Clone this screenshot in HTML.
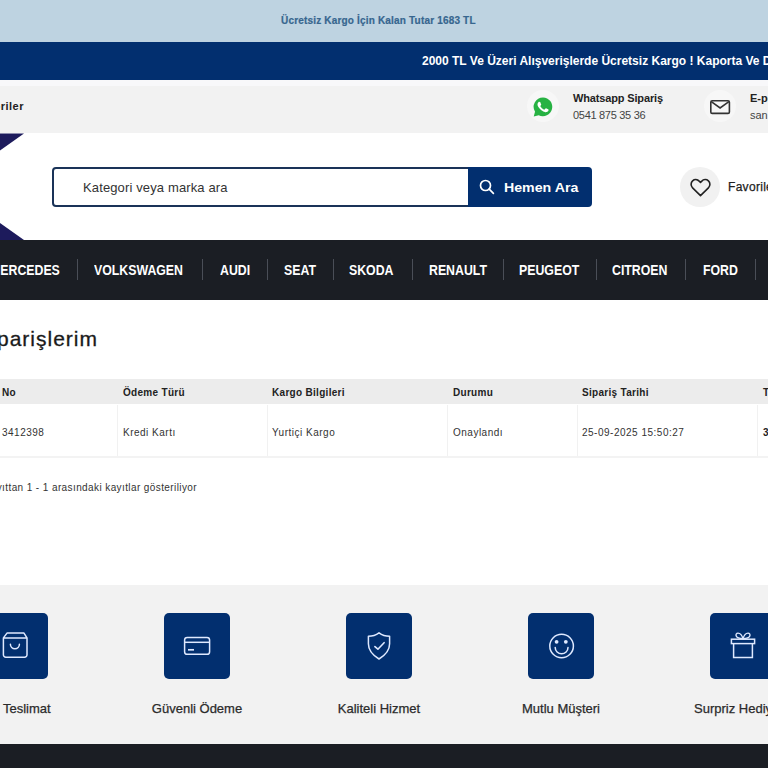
<!DOCTYPE html>
<html lang="tr">
<head>
<meta charset="utf-8">
<title>Siparişlerim</title>
<style>
*{margin:0;padding:0;box-sizing:border-box}
html,body{width:768px;height:768px;overflow:hidden;background:#fff;font-family:"Liberation Sans",sans-serif;color:#222}
.abs{position:absolute;white-space:nowrap}
#bar1{position:absolute;left:0;top:0;width:768px;height:42px;background:#bed3e1}
#bar2{position:absolute;left:0;top:42px;width:768px;height:38px;background:#022f6f}
#strip{position:absolute;left:0;top:80px;width:768px;height:6px;background:#f8f8fa}
#bar3{position:absolute;left:0;top:86px;width:768px;height:47px;background:#f2f2f2}
#header{position:absolute;left:0;top:133px;width:768px;height:107px;background:#fff}
#nav{position:absolute;left:0;top:240px;width:768px;height:60px;background:#1b1e24}
#feat{position:absolute;left:0;top:585px;width:768px;height:159px;background:#f2f2f2}
#foot{position:absolute;left:0;top:744px;width:768px;height:24px;background:#1b1e24}
.t1{font-size:10px;font-weight:bold;color:#37668f;-webkit-text-stroke:0.2px #37668f}
.t2{font-size:12px;font-weight:bold;color:#fff}
.circ{position:absolute;border-radius:50%;background:#fff}
.nav{font-size:14px;font-weight:bold;color:#fff;transform:scaleX(0.88);transform-origin:0 0}
.sep{position:absolute;top:259px;width:1px;height:21px;background:#4a4e57}
.box{position:absolute;top:613px;width:66px;height:66px;border-radius:5px;background:#022f6f}
.box svg{position:absolute;left:17px;top:17px}
.lbl{font-size:13px;color:#2b2b2b;text-align:center;-webkit-text-stroke:0.25px #2b2b2b}
.th{font-size:10px;font-weight:bold;color:#222;letter-spacing:0.3px}
.td{font-size:10px;color:#333;letter-spacing:0.5px}
.vb{position:absolute;top:405px;width:1px;height:51px;background:#f1f1f1}
</style>
</head>
<body>
<div id="bar1"></div>
<div class="abs t1" style="left:281px;top:15px;letter-spacing:0.18px">Ücretsiz Kargo İçin Kalan Tutar 1683 TL</div>
<div id="bar2"></div>
<div class="abs t2" style="left:422px;top:54px">2000 TL Ve Üzeri Alışverişlerde Ücretsiz Kargo ! Kaporta Ve Değişen</div>
<div id="strip"></div>
<div id="bar3"></div>
<div class="abs" style="right:744px;top:100px;font-size:11px;font-weight:bold;color:#222;letter-spacing:0.5px">Kategoriler</div>

<!-- whatsapp -->
<div class="circ" style="left:527px;top:90px;width:32px;height:32px;background:#f7f7f7"></div>
<svg class="abs" style="left:532px;top:96px" width="22" height="22" viewBox="0 0 24 24">
  <path d="M12.05 1.6A10.2 10.2 0 0 0 3.3 17.1L1.9 22.3l5.4-1.4a10.2 10.2 0 1 0 4.75-19.3z" fill="#27b243"/>
  <path d="M17.472 14.382c-.297-.149-1.758-.867-2.03-.967-.273-.099-.471-.148-.67.15-.197.297-.767.966-.94 1.164-.173.199-.347.223-.644.075-.297-.15-1.255-.463-2.39-1.475-.883-.788-1.48-1.761-1.653-2.059-.173-.297-.018-.458.13-.606.134-.133.298-.347.446-.52.149-.174.198-.298.298-.497.099-.198.05-.371-.025-.52-.075-.149-.669-1.612-.916-2.207-.242-.579-.487-.5-.669-.51-.173-.008-.371-.01-.57-.01-.198 0-.52.074-.792.372-.272.297-1.04 1.016-1.04 2.479 0 1.462 1.065 2.875 1.213 3.074.149.198 2.096 3.2 5.077 4.487.709.306 1.262.489 1.694.625.712.227 1.36.195 1.871.118.571-.085 1.758-.719 2.006-1.413.248-.694.248-1.289.173-1.413-.074-.124-.272-.198-.57-.347z" fill="#fff"/>
</svg>
<div class="abs" style="left:573px;top:92px;font-size:11px;font-weight:bold;color:#222;letter-spacing:-0.15px">Whatsapp Sipariş</div>
<div class="abs" style="left:573px;top:109px;font-size:11px;color:#444;letter-spacing:-0.3px">0541 875 35 36</div>

<!-- email -->
<div class="circ" style="left:704px;top:90px;width:32px;height:32px;background:#f7f7f7"></div>
<svg class="abs" style="left:709px;top:99px" width="22" height="16" viewBox="0 0 22 16">
  <rect x="1.8" y="1.8" width="18.6" height="12.6" rx="1.4" fill="none" stroke="#333" stroke-width="1.6"/>
  <path d="M2.3 2.6l8.8 6.4 8.8-6.4" fill="none" stroke="#333" stroke-width="1.6"/>
</svg>
<div class="abs" style="left:750px;top:92px;font-size:11px;font-weight:bold;color:#222">E-posta</div>
<div class="abs" style="left:750px;top:109px;font-size:11px;color:#444">san</div>

<div id="header"></div>
<!-- logo triangles -->
<svg class="abs" style="left:0;top:133px" width="30" height="108" viewBox="0 0 30 108">
  <polygon points="0,0.6 24,0.6 0,17.4" fill="#1d1b5c"/>
  <polygon points="0,90 24,107 0,107" fill="#1d1b5c"/>
</svg>

<!-- search -->
<div class="abs" style="left:52px;top:167px;width:430px;height:40px;border:2px solid #1a3358;border-radius:4px;background:#fff"></div>
<div class="abs" style="left:83px;top:180px;font-size:13px;color:#333;letter-spacing:0.13px">Kategori veya marka ara</div>
<div class="abs" style="left:468px;top:167px;width:124px;height:40px;background:#022f6f;border-radius:0 4px 4px 0"></div>
<svg class="abs" style="left:478px;top:178px" width="18" height="18" viewBox="0 0 18 18">
  <circle cx="7.5" cy="7.5" r="5" fill="none" stroke="#fff" stroke-width="1.7"/>
  <path d="M11.2 11.2l4.2 4.2" stroke="#fff" stroke-width="1.7" stroke-linecap="round"/>
</svg>
<div class="abs" style="left:504px;top:180px;font-size:13px;font-weight:bold;color:#fff;transform:scaleX(1.09);transform-origin:0 0">Hemen Ara</div>

<!-- favorites -->
<div class="circ" style="left:680px;top:167px;width:40px;height:40px;background:#f1f1f1"></div>
<svg class="abs" style="left:689px;top:178px" width="23" height="19" viewBox="0 0 23 19">
  <path d="M11.5 17.6L3.6 9.9C1.6 7.9 1.6 4.7 3.6 2.8c1.9-1.8 4.8-1.6 6.6.3l1.3 1.3 1.3-1.3c1.8-1.9 4.7-2.1 6.6-.3 2 1.9 2 5.1 0 7.1z" fill="none" stroke="#222" stroke-width="1.6" stroke-linejoin="round"/>
</svg>
<div class="abs" style="left:728px;top:180px;font-size:12px;color:#222;-webkit-text-stroke:0.25px #222;letter-spacing:0.3px">Favorilerim</div>

<!-- nav -->
<div id="nav"></div>
<div class="abs nav" style="left:-10px;top:262px">MERCEDES</div>
<div class="sep" style="left:77px"></div>
<div class="abs nav" style="left:94px;top:262px">VOLKSWAGEN</div>
<div class="sep" style="left:202px"></div>
<div class="abs nav" style="left:220px;top:262px">AUDI</div>
<div class="sep" style="left:267px"></div>
<div class="abs nav" style="left:284px;top:262px">SEAT</div>
<div class="sep" style="left:333px"></div>
<div class="abs nav" style="left:349px;top:262px">SKODA</div>
<div class="sep" style="left:412px"></div>
<div class="abs nav" style="left:429px;top:262px">RENAULT</div>
<div class="sep" style="left:503px"></div>
<div class="abs nav" style="left:519px;top:262px">PEUGEOT</div>
<div class="sep" style="left:596px"></div>
<div class="abs nav" style="left:612px;top:262px">CITROEN</div>
<div class="sep" style="left:685px"></div>
<div class="abs nav" style="left:703px;top:262px">FORD</div>
<div class="sep" style="left:755px"></div>

<!-- title -->
<div class="abs" style="right:670px;top:327px;font-size:21px;color:#1a1a1a;letter-spacing:1px;-webkit-text-stroke:0.3px #1a1a1a">Siparişlerim</div>

<!-- table -->
<div class="abs" style="left:0;top:379px;width:768px;height:25px;background:#ececec"></div>
<div class="abs th" style="left:2px;top:387px">No</div>
<div class="abs th" style="left:123px;top:387px">Ödeme Türü</div>
<div class="abs th" style="left:272px;top:387px">Kargo Bilgileri</div>
<div class="abs th" style="left:453px;top:387px">Durumu</div>
<div class="abs th" style="left:582px;top:387px">Sipariş Tarihi</div>
<div class="abs th" style="left:763px;top:387px">Tutar</div>
<div class="vb" style="left:117px"></div>
<div class="vb" style="left:267px"></div>
<div class="vb" style="left:447px"></div>
<div class="vb" style="left:577px"></div>
<div class="vb" style="left:757px"></div>
<div class="abs" style="left:0;top:456px;width:768px;height:2px;background:#f3f3f3"></div>
<div class="abs td" style="left:2px;top:427px">3412398</div>
<div class="abs td" style="left:123px;top:427px">Kredi Kartı</div>
<div class="abs td" style="left:272px;top:427px">Yurtiçi Kargo</div>
<div class="abs td" style="left:453px;top:427px">Onaylandı</div>
<div class="abs td" style="left:582px;top:427px">25-09-2025 15:50:27</div>
<div class="abs td" style="left:763px;top:427px;font-weight:bold;color:#222">300</div>

<div class="abs" style="right:571px;top:482px;font-size:10px;color:#333;letter-spacing:0.4px">Toplam 1 kayıttan 1 - 1 arasındaki kayıtlar gösteriliyor</div>

<!-- features -->
<div id="feat"></div>
<div class="box" style="left:-18px"></div>
<div class="box" style="left:164px"></div>
<div class="box" style="left:346px"></div>
<div class="box" style="left:528px"></div>
<div class="box" style="left:710px"></div>

<svg class="abs" style="left:0;top:630px" width="30" height="30" viewBox="0 0 30 30">
  <path d="M7.2 2.9h16.6l3.2 5v16.9a2.4 2.4 0 0 1-2.4 2.4H5.8a2.4 2.4 0 0 1-2.4-2.4V7.9z M3.4 7.9h23.6" fill="none" stroke="#dfe9ff" stroke-width="1.5" stroke-linejoin="round"/>
  <path d="M10.4 14.2a4.5 4.5 0 0 0 9 0" fill="none" stroke="#dfe9ff" stroke-width="1.5" stroke-linecap="round"/>
</svg>
<svg class="abs" style="left:182px;top:634px" width="30" height="24" viewBox="0 0 30 24">
  <rect x="2.6" y="3.5" width="25" height="16.8" rx="2.6" fill="none" stroke="#dfe9ff" stroke-width="1.5"/>
  <path d="M2.6 8.3h25" stroke="#dfe9ff" stroke-width="1.5"/>
  <path d="M6 15.8h6" stroke="#dfe9ff" stroke-width="1.7"/>
</svg>
<svg class="abs" style="left:364px;top:630px" width="30" height="32" viewBox="0 0 30 32">
  <path d="M15 2.8c3.2 2.4 7 3.4 10.6 3.4v7.6c0 6.6-4.6 11.6-10.6 15.2C9 25.4 4.4 20.4 4.4 13.8V6.2C8 6.2 11.8 5.2 15 2.8z" fill="none" stroke="#dfe9ff" stroke-width="1.5" stroke-linejoin="round"/>
  <path d="M10.9 16.6l3 2.6 6.2-6.5" fill="none" stroke="#dfe9ff" stroke-width="1.6" stroke-linecap="round" stroke-linejoin="round"/>
</svg>
<svg class="abs" style="left:546px;top:631px" width="30" height="30" viewBox="0 0 30 30">
  <circle cx="15.6" cy="15" r="11.8" fill="none" stroke="#dfe9ff" stroke-width="1.5"/>
  <circle cx="10.6" cy="10.8" r="1.9" fill="#dfe9ff"/>
  <circle cx="19.8" cy="10.8" r="1.9" fill="#dfe9ff"/>
  <path d="M9.2 16.4a6.4 6.4 0 0 0 12.8 0" fill="none" stroke="#dfe9ff" stroke-width="1.5" stroke-linecap="round"/>
</svg>
<svg class="abs" style="left:728px;top:630px" width="30" height="30" viewBox="0 0 30 30">
  <rect x="3.4" y="9.2" width="23.2" height="4.4" fill="none" stroke="#dfe9ff" stroke-width="1.5"/>
  <path d="M5.6 13.6V27.4h18.8V13.6" fill="none" stroke="#dfe9ff" stroke-width="1.5"/>
  <path d="M15 8.7c-1-3.4-3.2-5.6-5-5.6-1.6 0-2.4 1.4-1.8 3 .5 1.4 2.6 2.6 6.8 2.6zM15 8.7c1-3.4 3.2-5.6 5-5.6 1.6 0 2.4 1.4 1.8 3-.5 1.4-2.6 2.6-6.8 2.6z" fill="none" stroke="#dfe9ff" stroke-width="1.4" stroke-linejoin="round"/>
</svg>
<div class="abs lbl" style="left:3px;top:701px">Teslimat</div>
<div class="abs lbl" style="left:147px;top:701px;width:100px">Güvenli Ödeme</div>
<div class="abs lbl" style="left:329px;top:701px;width:100px">Kaliteli Hizmet</div>
<div class="abs lbl" style="left:511px;top:701px;width:100px">Mutlu Müşteri</div>
<div class="abs lbl" style="left:694px;top:701px">Surpriz Hediye</div>

<div id="foot"></div>
</body>
</html>
